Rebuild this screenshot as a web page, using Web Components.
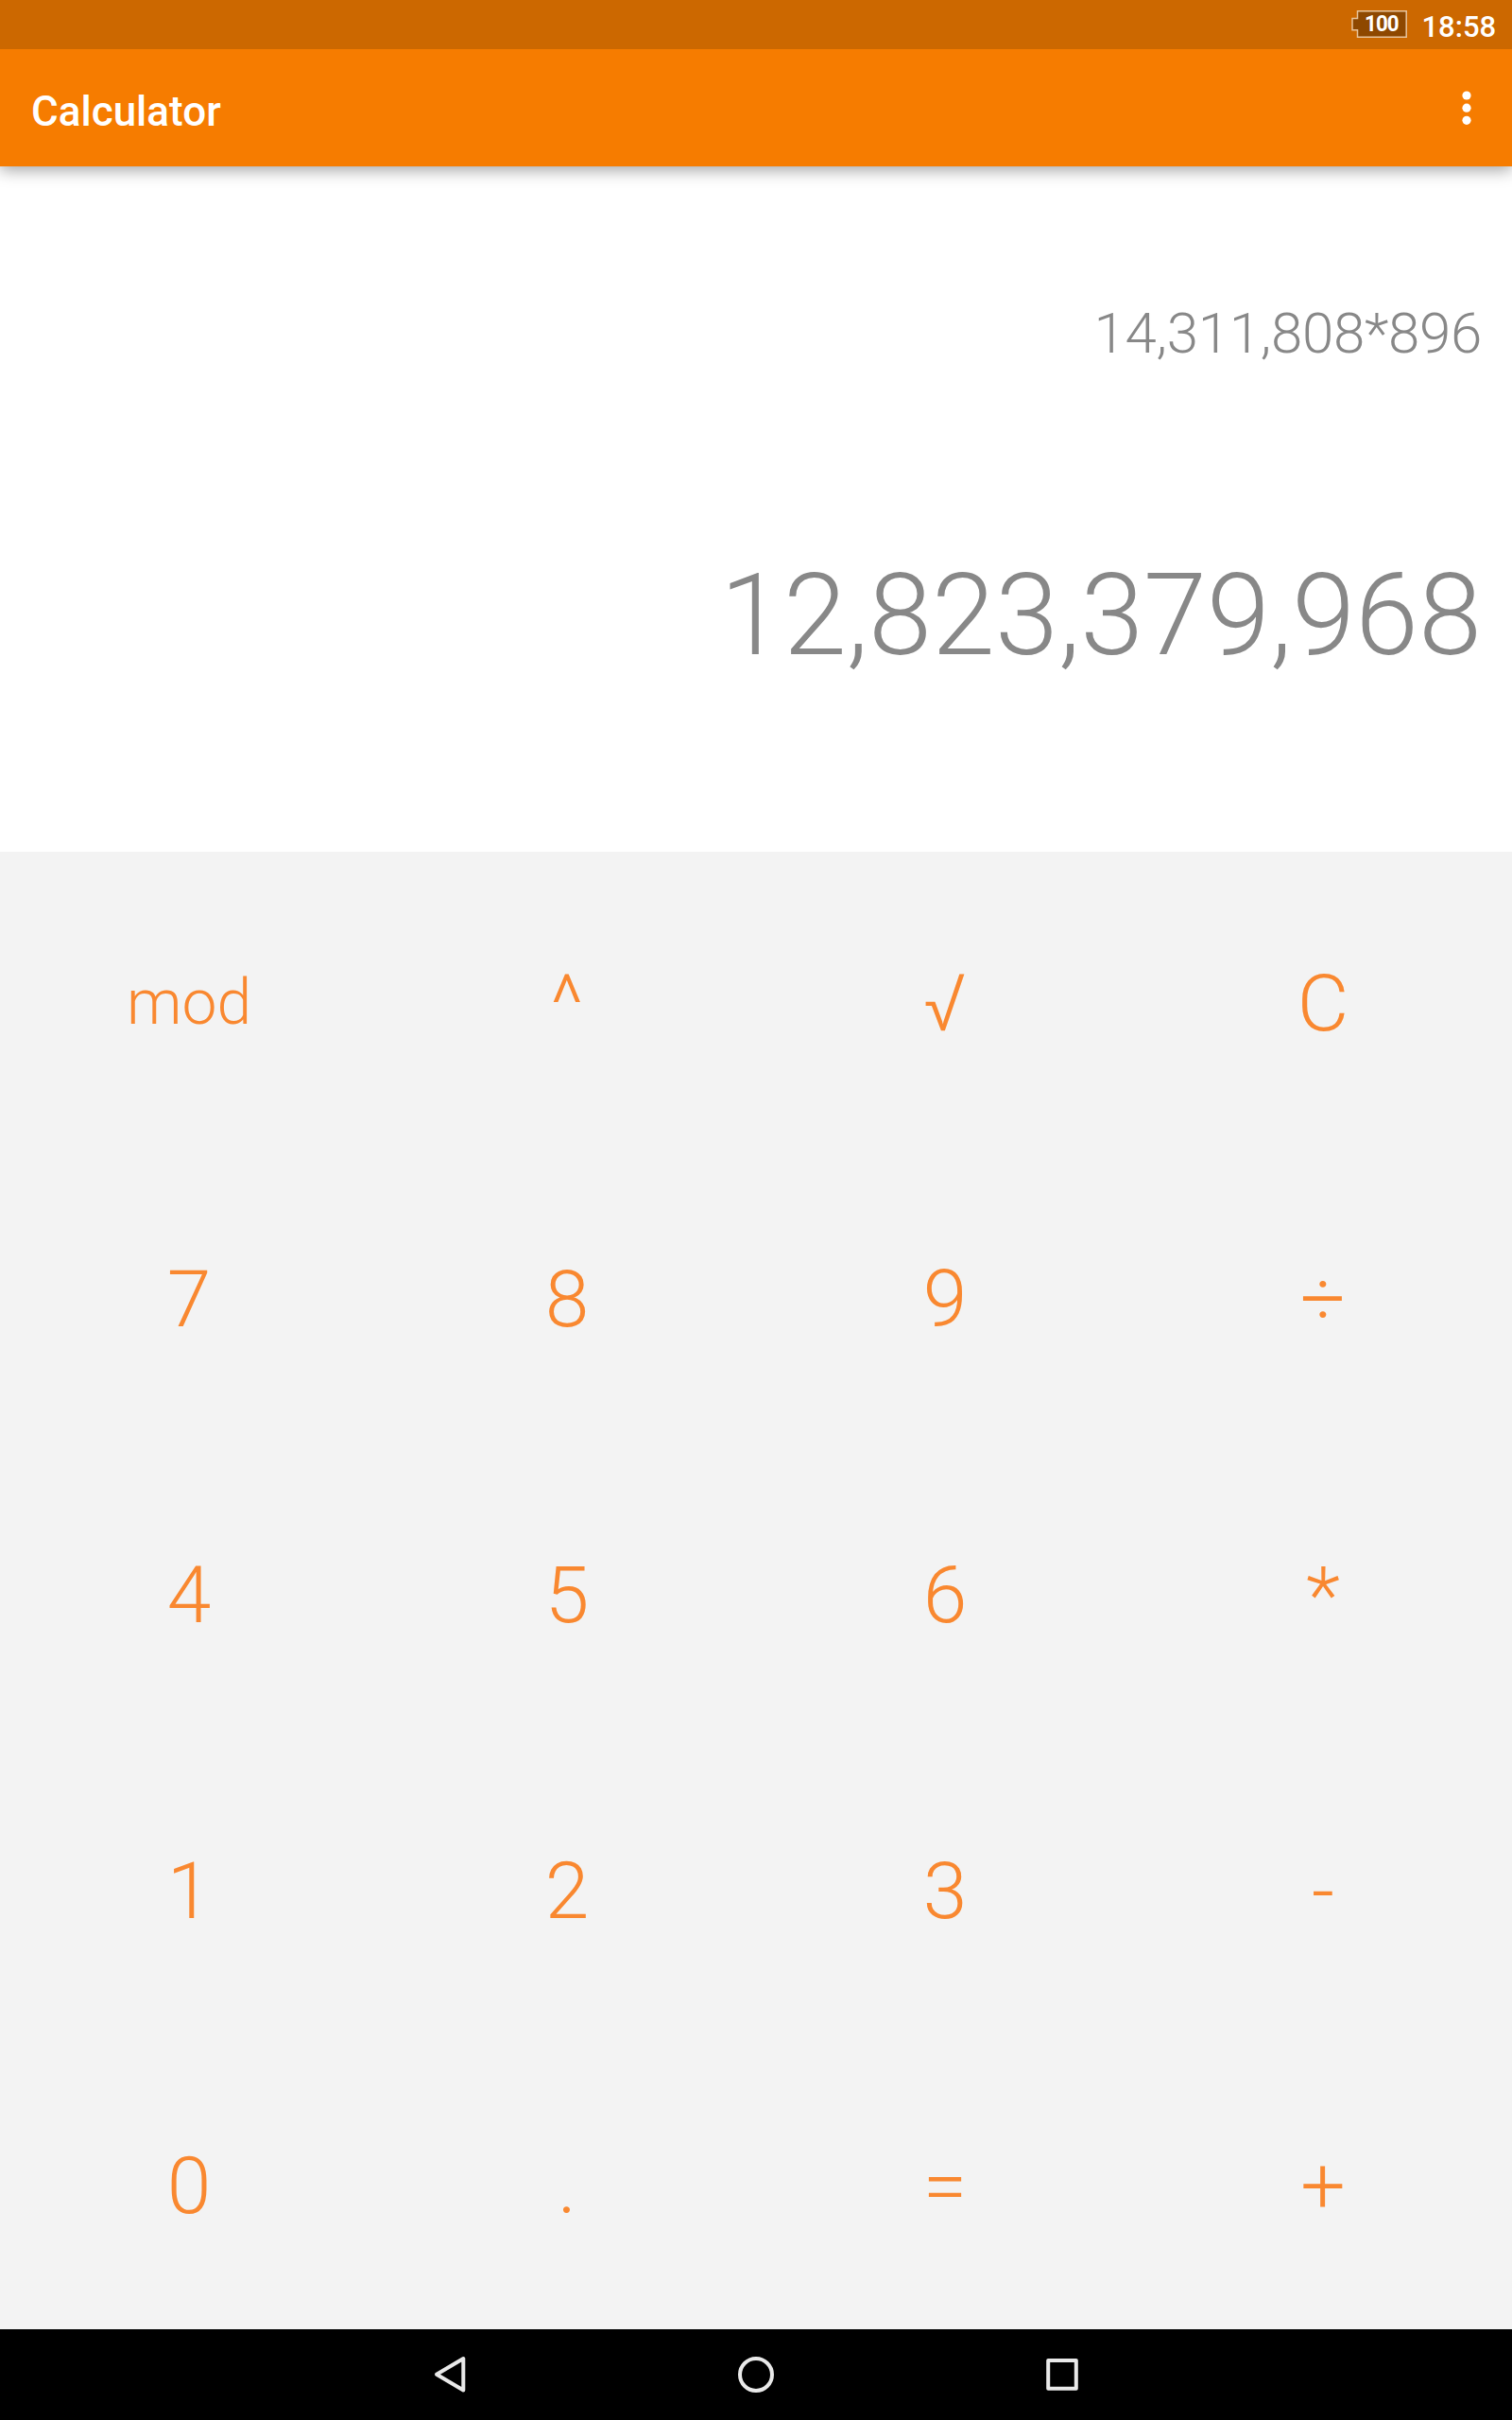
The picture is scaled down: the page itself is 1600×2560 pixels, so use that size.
<!DOCTYPE html>
<html lang="en">
<head>
<meta charset="utf-8">
<title>Calculator</title>
<style>
html,body{margin:0;padding:0}
body{width:1600px;height:2560px;overflow:hidden;background:#fff;font-family:Roboto,"Noto Sans",sans-serif}
</style>
</head>
<body>
<calc-screen>
  <status-bar slot="status" level="100">18:58</status-bar>
  <app-bar slot="bar">Calculator</app-bar>
  <calc-display slot="display"><span slot="formula">14,311,808*896</span><span slot="result">12,823,379,968</span></calc-display>
  <calc-keypad slot="keys">
    <calc-key small>mod</calc-key><calc-key>^</calc-key><calc-key>√</calc-key><calc-key>C</calc-key>
    <calc-key>7</calc-key><calc-key>8</calc-key><calc-key>9</calc-key><calc-key>÷</calc-key>
    <calc-key>4</calc-key><calc-key>5</calc-key><calc-key>6</calc-key><calc-key>*</calc-key>
    <calc-key>1</calc-key><calc-key>2</calc-key><calc-key>3</calc-key><calc-key>-</calc-key>
    <calc-key>0</calc-key><calc-key>.</calc-key><calc-key>=</calc-key><calc-key>+</calc-key>
  </calc-keypad>
  <nav-bar slot="nav"></nav-bar>
</calc-screen>
<script>
const define = (name, html) => customElements.define(name, class extends HTMLElement {
  constructor() {
    super();
    this.attachShadow({ mode: 'open' }).innerHTML = html;
  }
  connectedCallback() {
    const level = this.shadowRoot.querySelector('.level');
    if (level) level.textContent = this.getAttribute('level');
  }
});

define('calc-screen', `
<style>
:host{display:flex;flex-direction:column;width:1600px;height:2560px}
</style>
<slot name="status"></slot><slot name="bar"></slot><slot name="display"></slot><slot name="keys"></slot><slot name="nav"></slot>`);

define('status-bar', `
<style>
:host{display:flex;flex:none;box-sizing:border-box;height:52px;background:#cc6800;color:#fff;justify-content:flex-end;align-items:flex-start;padding:0 17px 0 0;font-weight:500;font-size:32px;line-height:36px;z-index:2;position:relative}
.battery{display:grid;width:59px;height:30px;margin:11px 13px 0 0}
.battery>*{grid-area:1/1}
.level{font-size:24px;font-weight:700;line-height:28px;padding-left:14px;letter-spacing:-1px;transform:scaleX(.93);transform-origin:14px 0}
.time{padding-top:10px;transform:scaleX(.97);transform-origin:100% 0}
</style>
<div class="battery"><svg width="59" height="30" viewBox="0 0 59 30"><path d="M6.5 .8H58.2V28.2H6.5V20.8H1V8.5H6.5Z" fill="#8e4800" stroke="#e8c49c" stroke-width="1.5"/></svg><span class="level"></span></div>
<span class="time"><slot></slot></span>`);

define('app-bar', `
<style>
:host{display:flex;flex:none;box-sizing:border-box;height:124px;background:#f67c00;color:#fff;justify-content:space-between;align-items:center;padding:0 28px 0 33px;box-shadow:0 4px 16px rgba(0,0,0,.36);font-size:44px;font-weight:500;line-height:52px;z-index:1;position:relative}
.title{padding-top:7px}
.menu{display:flex;width:40px;justify-content:center}
</style>
<span class="title"><slot></slot></span>
<span class="menu"><svg width="10" height="48" viewBox="0 0 10 48" fill="#fff"><circle cx="5" cy="11" r="4.6"/><circle cx="5" cy="24.2" r="4.6"/><circle cx="5" cy="37.3" r="4.6"/></svg></span>`);

define('calc-display', `
<style>
:host{display:flex;flex:none;flex-direction:column;box-sizing:border-box;height:725px;padding:137px 32px 0;align-items:flex-end;background:#fff;color:#888;font-weight:300}
.formula{font-size:60px;line-height:80px;letter-spacing:-.3px}
.result{font-size:120.5px;line-height:160px;letter-spacing:.1px;margin-top:178px}
</style>
<div class="formula"><slot name="formula"></slot></div>
<div class="result"><slot name="result"></slot></div>`);

define('calc-keypad', `
<style>
:host{display:grid;flex:none;height:1563px;grid-template-columns:repeat(4,1fr);grid-template-rows:312px 313px 313px 313px 312px;background:#f3f3f3}
</style>
<slot></slot>`);

define('calc-key', `
<style>
:host{display:flex;align-items:center;justify-content:center;color:#f98830;font-weight:300;font-size:84px;line-height:1.3184;padding-top:calc(.111em + 2px)}
:host([small]){font-size:66px;padding-top:.111em}
</style>
<slot></slot>`);

define('nav-bar', `
<style>
:host{display:flex;flex:none;height:96px;background:#000;justify-content:center;align-items:center;gap:284px}
svg{display:block;fill:none;stroke:#e9e9e9;stroke-width:4;stroke-linejoin:round}
</style>
<svg width="40" height="40" viewBox="0 0 40 40"><path d="M34.3 3V36.5L6 19.8Z"/></svg>
<svg width="40" height="40" viewBox="0 0 40 40"><circle cx="20" cy="20" r="17"/></svg>
<svg width="40" height="40" viewBox="0 0 40 40"><rect x="5.2" y="5" width="29.6" height="29.8"/></svg>`);
</script>
</body>
</html>
